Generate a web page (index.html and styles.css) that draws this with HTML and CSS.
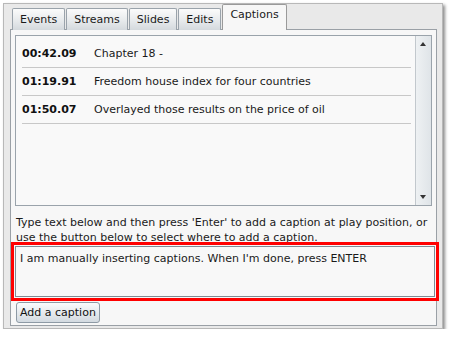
FILE: index.html
```html
<!DOCTYPE html>
<html>
  <head>
    <title>Captions</title>
    <link rel="stylesheet" href="styles.css">
  </head>
  <body>
    <div class="frame">
      <div class="tabs">
        <div class="tab">Events</div>
        <div class="tab">Streams</div>
        <div class="tab">Slides</div>
        <div class="tab">Edits</div>
        <div class="tab active">Captions</div>
      </div>
      <div class="panel">
        <div class="list">
          <div class="rows">
            <div class="row"><span class="time">00:42.09</span><span>Chapter 18 -</span></div>
            <div class="row"><span class="time">01:19.91</span><span>Freedom house index for four countries</span></div>
            <div class="row"><span class="time">01:50.07</span><span>Overlayed those results on the price of oil</span></div>
          </div>
          <div class="scrollbar">
            <span class="arrow up"></span>
            <span class="arrow down"></span>
          </div>
        </div>
        <p class="hint">Type text below and then press 'Enter' to add a caption at play position, or<br>use the button below to select where to add a caption.</p>
        <div class="input">I am manually inserting captions. When I'm done, press ENTER</div>
        <button class="add">Add a caption</button>
      </div>
    </div>
  </body>
</html>
```

FILE: styles.css
```css
body {
  margin: 0;
  background: #fff;
  font-family: "DejaVu Sans", Verdana, sans-serif;
  font-size: 11px;
  color: #1a1a1a;
}

.frame {
  margin: 3px 0 0 3px;
  width: 440px;
  height: 326px;
  background: #e9e9e9;
  border: 1px solid #b8b8b8;
  box-sizing: border-box;
  box-shadow: 2px 2px 3px rgba(0, 0, 0, 0.45);
  display: flex;
  flex-direction: column;
  padding-bottom: 2px;
}

.tabs {
  display: flex;
  align-items: flex-end;
  gap: 1px;
  padding-left: 8px;
  height: 26px;
  margin-bottom: -1px;
}

.tab {
  height: 22px;
  padding: 0 7px;
  line-height: 21px;
  border: 1px solid #9aa3ab;
  border-bottom: none;
  border-radius: 2px 2px 0 0;
  background: linear-gradient(#fbfbfb, #e7eaec 55%, #d4d9dd);
  box-sizing: border-box;
  position: relative;
}

.tab.active {
  height: 26px;
  line-height: 20px;
  background: #f7f7f7;
  border-color: #9a9a9a;
  z-index: 1;
}

.panel {
  margin: 0 5px 0 6px;
  flex: 1;
  background: #f7f7f7;
  border: 1px solid #9aa0a6;
  padding: 5px 4px 0 4px;
  display: flex;
  flex-direction: column;
}

.list {
  height: 171px;
  border: 1px solid #9aa3ab;
  background: #f9f9f9;
  box-sizing: border-box;
  display: flex;
}

.rows {
  flex: 1;
  padding: 4px 4px 0 6px;
}

.row {
  height: 28px;
  display: flex;
  align-items: center;
  border-bottom: 1px solid #c8c8c8;
  box-sizing: border-box;
}

.time {
  width: 72px;
  font-weight: bold;
  color: #111;
}

.scrollbar {
  width: 15px;
  border-left: 1px solid #c2c8cd;
  background: linear-gradient(90deg, #eef1f3, #dfe4e8);
  position: relative;
}

.arrow {
  position: absolute;
  left: 4px;
  width: 0;
  height: 0;
  border-left: 3.5px solid transparent;
  border-right: 3.5px solid transparent;
}

.arrow.up {
  top: 6px;
  border-bottom: 4px solid #333;
}

.arrow.down {
  bottom: 6px;
  border-top: 4px solid #333;
}

.hint {
  margin: 9px 0 0 1px;
  line-height: 15px;
  white-space: nowrap;
}

.input {
  margin: 1px 0 0 0;
  width: 420px;
  height: 51px;
  box-sizing: border-box;
  border: 1px solid #7f8a94;
  background: #f8f8f8;
  padding: 5px 4px;
  outline: 3px solid #ff0000;
  outline-offset: 1px;
}

.add {
  align-self: flex-start;
  margin: 5px 0 0 1px;
  height: 21px;
  padding: 0 3px;
  font-family: "DejaVu Sans", Verdana, sans-serif;
  font-size: 11px;
  color: #111;
  border: 1px solid #8e9aa5;
  border-radius: 3px;
  background: linear-gradient(#fafbfc, #e6eaee 50%, #d3dae0);
}
```
